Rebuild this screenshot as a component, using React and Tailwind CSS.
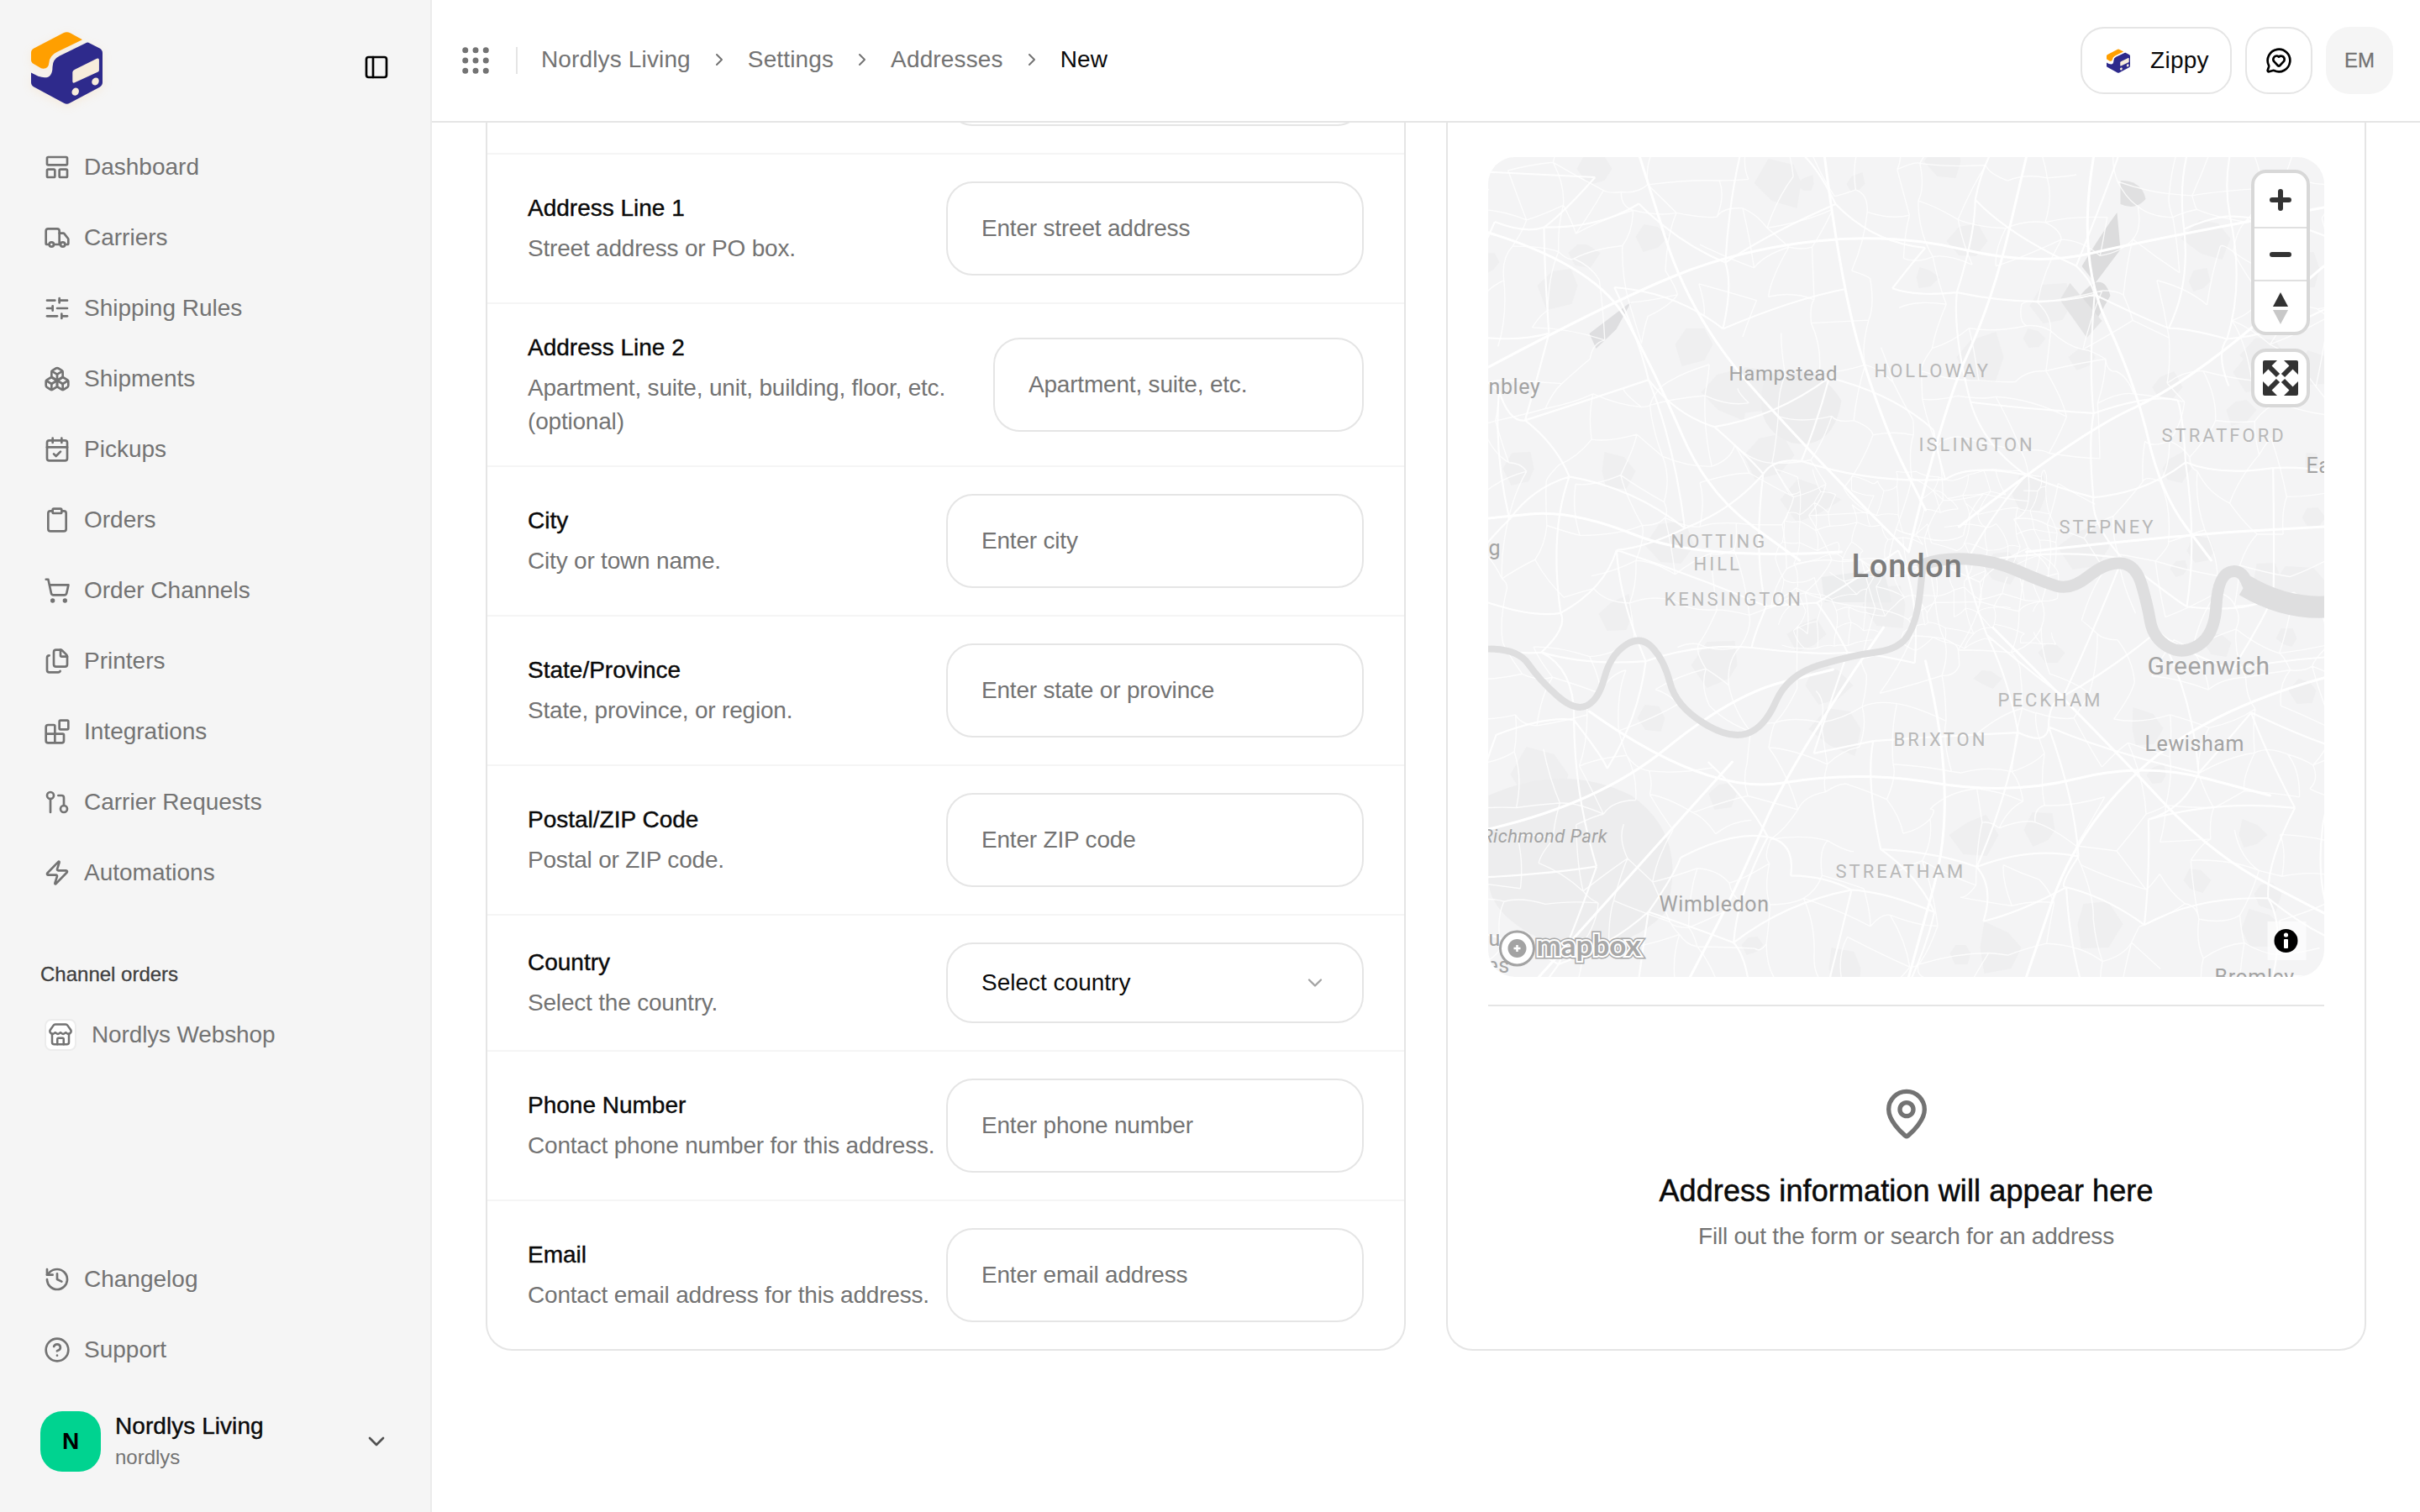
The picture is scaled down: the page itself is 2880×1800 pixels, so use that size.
import React from 'react';
import {
  LayoutPanelTop, Truck, SlidersHorizontal, Boxes, CalendarCheck, Clipboard, ShoppingCart, Files, Blocks,
  GitPullRequest, Zap, History, CircleHelp, Store, ChevronDown, ChevronRight, PanelLeft, Grip,
  MessageCircleHeart, MapPin,
} from 'lucide-react';

const navItems = [
  { label: 'Dashboard', icon: LayoutPanelTop },
  { label: 'Carriers', icon: Truck },
  { label: 'Shipping Rules', icon: SlidersHorizontal },
  { label: 'Shipments', icon: Boxes },
  { label: 'Pickups', icon: CalendarCheck },
  { label: 'Orders', icon: Clipboard },
  { label: 'Order Channels', icon: ShoppingCart },
  { label: 'Printers', icon: Files },
  { label: 'Integrations', icon: Blocks },
  { label: 'Carrier Requests', icon: GitPullRequest },
  { label: 'Automations', icon: Zap },
];

const formRows = [
  { label: 'Address Line 1', hint: 'Street address or PO box.', placeholder: 'Enter street address' },
  { label: 'Address Line 2', hint: 'Apartment, suite, unit, building, floor, etc. (optional)', placeholder: 'Apartment, suite, etc.', narrow: true },
  { label: 'City', hint: 'City or town name.', placeholder: 'Enter city' },
  { label: 'State/Province', hint: 'State, province, or region.', placeholder: 'Enter state or province' },
  { label: 'Postal/ZIP Code', hint: 'Postal or ZIP code.', placeholder: 'Enter ZIP code' },
  { label: 'Country', hint: 'Select the country.', select: 'Select country' },
  { label: 'Phone Number', hint: 'Contact phone number for this address.', placeholder: 'Enter phone number' },
  { label: 'Email', hint: 'Contact email address for this address.', placeholder: 'Enter email address', last: true },
];

const mapLabels = [
  { t: 'Hampstead', x: 286, y: 260, s: 24 },
  { t: 'nbley', x: 0, y: 275, s: 25 },
  { t: 'g', x: 0, y: 467, s: 25 },
  { t: 'Ea', x: 973, y: 369, s: 25 },
  { t: 'Greenwich', x: 784, y: 608, s: 30 },
  { t: 'Lewisham', x: 781, y: 700, s: 25 },
  { t: 'Wimbledon', x: 203, y: 891, s: 25 },
  { t: 'Bromley', x: 864, y: 978, s: 25 },
  { t: 'u', x: 0, y: 932, s: 25 },
  { t: 'es', x: -2, y: 964, s: 25 },
  { t: 'HOLLOWAY', x: 459, y: 256, s: 22, b: true },
  { t: 'ISLINGTON', x: 512, y: 344, s: 22, b: true },
  { t: 'STRATFORD', x: 801, y: 333, s: 22, b: true },
  { t: 'NOTTING', x: 217, y: 459, s: 22, b: true },
  { t: 'HILL', x: 244, y: 486, s: 22, b: true },
  { t: 'KENSINGTON', x: 209, y: 528, s: 22, b: true },
  { t: 'STEPNEY', x: 679, y: 442, s: 22, b: true },
  { t: 'PECKHAM', x: 606, y: 648, s: 22, b: true },
  { t: 'BRIXTON', x: 482, y: 695, s: 22, b: true },
  { t: 'STREATHAM', x: 413, y: 852, s: 22, b: true },
];

const thamesWest = [[-10, 586], [33, 583], [61, 623], [103, 660], [131, 646], [145, 593], [181, 569], [209, 599], [223, 653], [286, 693], [328, 680], [356, 616], [433, 593], [489, 586], [510, 552], [517, 485]];
const thamesEast = [[517, 485], [538, 477], [601, 480], [658, 505], [693, 516], [735, 482], [770, 485], [784, 532], [791, 573], [826, 593], [864, 569], [868, 499], [896, 489], [910, 526], [1004, 539]];

const majorRoads = [
  [[500, 470], [380, 350], [240, 190], [180, 0]],
  [[500, 470], [540, 300], [600, 170], [640, 0]],
  [[560, 440], [700, 330], [830, 270], [994, 130]],
  [[420, 470], [250, 480], [100, 420], [0, 430]],
  [[470, 560], [360, 720], [300, 860], [240, 976]],
  [[520, 600], [560, 760], [500, 976]],
  [[600, 560], [740, 700], [860, 830], [994, 900]],
  [[640, 470], [820, 450], [994, 440]],
  [[0, 250], [150, 170], [300, 110], [480, 90], [650, 130], [780, 100], [994, 60]],
  [[120, 660], [260, 760], [440, 730], [620, 760], [780, 720], [930, 760]],
  [[0, 90], [130, 130], [200, 260], [260, 400], [370, 480]],
  [[720, 0], [700, 120], [770, 270], [800, 400], [860, 480]],
  [[0, 800], [130, 770], [290, 640], [410, 610]],
  [[994, 620], [850, 660], [700, 800], [640, 976]],
  [[60, 976], [200, 820], [290, 720]],
  [[400, 0], [420, 160], [470, 320], [520, 420]],
];

// small seeded generator so the map comes out the same every run
const makeRandom = (seed) => {
  let value = seed;
  return () => {
    value = (value * 16807) % 2147483647;
    return (value - 1) / 2147483646;
  };
};

const smoothPath = (points) => {
  let d = `M${points[0][0]} ${points[0][1]}`;
  for (let i = 1; i < points.length - 1; i++) {
    const mx = (points[i][0] + points[i + 1][0]) / 2;
    const my = (points[i][1] + points[i + 1][1]) / 2;
    d += ` Q${points[i][0]} ${points[i][1]} ${mx} ${my}`;
  }
  const end = points[points.length - 1];
  return `${d} L${end[0]} ${end[1]}`;
};

const buildStreets = (seed, cell, x0, y0, x1, y1, keep) => {
  const random = makeRandom(seed);
  const cols = Math.ceil((x1 - x0) / cell);
  const rows = Math.ceil((y1 - y0) / cell);
  const nodes = [];
  for (let r = 0; r <= rows; r++) {
    nodes.push([]);
    for (let c = 0; c <= cols; c++) {
      nodes[r].push([x0 + c * cell + (random() - 0.5) * cell * 0.9, y0 + r * cell + (random() - 0.5) * cell * 0.9]);
    }
  }
  const curve = (a, b) => {
    const mx = (a[0] + b[0]) / 2 + (random() - 0.5) * cell * 0.4;
    const my = (a[1] + b[1]) / 2 + (random() - 0.5) * cell * 0.4;
    return `M${a[0]} ${a[1]} Q${mx} ${my} ${b[0]} ${b[1]}`;
  };
  const streets = [];
  for (let r = 0; r <= rows; r++) {
    for (let c = 0; c <= cols; c++) {
      if (c < cols && random() < keep) streets.push(curve(nodes[r][c], nodes[r][c + 1]));
      if (r < rows && random() < keep) streets.push(curve(nodes[r][c], nodes[r + 1][c]));
    }
  }
  return streets.join(' ');
};

const buildPatches = () => {
  const random = makeRandom(77);
  const patches = [];
  for (let i = 0; i < 70; i++) {
    const cx = random() * 994;
    const cy = random() * 976;
    const size = 12 + random() * 22;
    const pts = [];
    for (let k = 0; k < 6; k++) {
      const a = (k / 6) * Math.PI * 2;
      const rr = size * (0.6 + random() * 0.6);
      pts.push(`${Math.round(cx + Math.cos(a) * rr)},${Math.round(cy + Math.sin(a) * rr)}`);
    }
    patches.push(pts.join(' '));
  }
  return patches;
};

const outerStreets = buildStreets(11, 46, -20, -20, 1010, 990, 0.72);
const midStreets = buildStreets(37, 104, -20, -20, 1010, 990, 0.8);
const innerStreets = buildStreets(23, 20, 350, 380, 660, 580, 0.75);
const patches = buildPatches();

const Logo = ({ className }) => (
  <svg viewBox="115 110 250 255" className={className}>
    <path fill="#ff9f00" d="M125 170 L228 116 Q240 110 252 116 L292 138 Q295 140 290 142 L205 183 Q180 195 178 220 Q176 245 150 240 L120 222 Q115 218 115 212 L115 185 Q115 175 125 170 Z" />
    <path fill="#2e2a8c" d="M316 150 L355 170 Q365 176 365 186 L365 290 Q365 300 355 306 L250 362 Q240 368 230 362 L125 305 Q115 300 115 290 L115 255 L140 268 Q190 285 190 235 Q190 208 215 196 L305 152 Q312 148 316 150 Z" />
    <path fill="#f7ecdc" d="M268 244 L345 206 Q353 203 353 211 L353 246 Q353 251 348 253 L268 290 Q260 293 260 286 L260 254 Q260 248 268 244 Z" />
    <ellipse cx="270" cy="322" rx="12" ry="14" fill="#f7ecdc" transform="rotate(30 270 322)" />
    <ellipse cx="340" cy="286" rx="12" ry="14" fill="#f7ecdc" transform="rotate(30 340 286)" />
  </svg>
);

const NavRow = ({ label, icon: Icon }) => (
  <a className="flex h-[72px] items-center gap-4 px-4 text-[28px] leading-[40px] text-[#737373]">
    <Icon size={32} strokeWidth={2} className="shrink-0" />
    <span>{label}</span>
  </a>
);

const Sidebar = () => (
  <aside className="flex h-screen w-[514px] shrink-0 flex-col border-r-2 border-[#ebebeb] bg-[#f5f5f5]">
    <div className="flex h-[160px] shrink-0 items-center justify-between pl-[37px] pr-[48px]">
      <Logo className="h-[87px] w-[85px] drop-shadow-[0_3px_6px_rgba(255,170,60,0.12)]" />
      <PanelLeft size={32} strokeWidth={2} className="text-black" />
    </div>
    <nav className="mt-[3px] flex flex-col gap-3 px-9">
      {navItems.map((item) => (
        <NavRow key={item.label} {...item} />
      ))}
    </nav>
    <div className="mt-[69px] px-12 text-[24px] leading-[32px] text-[#404040] [-webkit-text-stroke:0.3px_#404040]">Channel orders</div>
    <div className="mt-[36px] flex items-center gap-[18px] px-[53px] text-[28px] leading-[40px] text-[#737373]">
      <span className="flex h-[38px] w-[38px] items-center justify-center rounded-lg border-2 border-[#ececec] bg-white">
        <Store size={30} strokeWidth={2} />
      </span>
      <span className="tracking-[-0.005em]">Nordlys Webshop</span>
    </div>
    <div className="mt-auto flex flex-col gap-3 px-9">
      <NavRow label="Changelog" icon={History} />
      <NavRow label="Support" icon={CircleHelp} />
    </div>
    <div className="mt-[37px] flex items-center pb-12 pl-12 pr-[48px]">
      <span className="flex h-[72px] w-[72px] items-center justify-center rounded-[26px] bg-[#00d390] text-[28px] font-semibold text-black">N</span>
      <div className="ml-[17px] flex flex-1 flex-col">
        <span className="text-[28px] leading-[36px] tracking-[0.002em] text-[#0a0a0a] [-webkit-text-stroke:0.4px_#0a0a0a]">Nordlys Living</span>
        <span className="pt-0.5 text-[24px] leading-[34px] text-[#737373]">nordlys</span>
      </div>
      <ChevronDown size={32} strokeWidth={2} className="text-[#525252]" />
    </div>
  </aside>
);

const Topbar = () => (
  <header className="flex h-[146px] shrink-0 items-center border-b-2 border-[#e5e5e5] bg-white pl-[31px] pr-8">
    <Grip size={42} strokeWidth={2} className="text-[#737373]" />
    <span className="ml-[27px] mr-[28px] h-8 w-0.5 bg-[#e5e5e5]" />
    <div className="-mt-0.5 flex items-center gap-[22px] text-[28px] leading-[40px] tracking-[0.005em] text-[#737373]">
      <span>Nordlys Living</span>
      <ChevronRight size={24} strokeWidth={2} />
      <span>Settings</span>
      <ChevronRight size={24} strokeWidth={2} />
      <span>Addresses</span>
      <ChevronRight size={24} strokeWidth={2} />
      <span className="text-[#0a0a0a]">New</span>
    </div>
    <div className="ml-auto flex items-center gap-4">
      <button className="flex h-20 w-[180px] items-center gap-[24px] rounded-[28px] border-2 border-[#e5e5e5] bg-white pl-[29px] text-[28px] tracking-[0.01em] text-[#0a0a0a]">
        <Logo className="h-[29px] w-[28px]" />
        Zippy
      </button>
      <button className="flex h-20 w-20 items-center justify-center rounded-[28px] border-2 border-[#e5e5e5] bg-white">
        <MessageCircleHeart size={32} strokeWidth={2} className="text-black" />
      </button>
      <span className="flex h-20 w-20 items-center justify-center rounded-[28px] bg-[#f5f5f5] text-[24px] text-[#737373] [-webkit-text-stroke:0.3px_#737373]">EM</span>
    </div>
  </header>
);

const FormRow = ({ label, hint, placeholder, select, narrow, last }) => (
  <div className={`flex items-center justify-between gap-2 py-8 pl-12 pr-12 ${last ? '' : 'border-b-2 border-[#f5f5f5]'}`}>
    <div className="min-w-0 flex-1">
      <div className="text-[28px] leading-[40px] text-[#0a0a0a] [-webkit-text-stroke:0.4px_#0a0a0a]">{label}</div>
      <div className="mt-2 text-[28px] leading-[40px] tracking-[-0.007em] text-[#737373]">{hint}</div>
    </div>
    {select ? (
      <button className="flex h-24 w-[497px] shrink-0 items-center justify-between rounded-[32px] border-2 border-[#e5e5e5] bg-white pl-[40px] pr-[42px] text-[28px] text-[#0a0a0a]">
        {select}
        <ChevronDown size={28} strokeWidth={2} className="text-[#a3a3a3]" />
      </button>
    ) : (
      <input
        placeholder={placeholder}
        className={`h-28 shrink-0 rounded-[32px] border-2 border-[#e5e5e5] bg-white px-[40px] text-[28px] tracking-[-0.007em] outline-none placeholder:text-[#737373] ${narrow ? 'w-[441px]' : 'w-[497px]'}`}
      />
    )}
  </div>
);

const MapCanvas = () => (
  <div className="relative h-[976px] w-full shrink-0 overflow-hidden rounded-[32px] bg-[#f4f4f5]">
    <svg viewBox="0 0 994 976" className="block h-full w-full">
      {patches.map((pts, i) => (
        <polygon key={i} points={pts} fill="#efeff0" />
      ))}
      <path fill="#ededee" d="M0 760 Q90 720 170 760 Q240 810 210 900 Q150 960 60 930 Q0 900 0 860 Z" />
      <path fill="#ededee" d="M330 260 Q390 240 420 290 Q410 350 360 340 Q310 320 330 260 Z" />
      <path fill="#ecedee" d="M396 500 L470 490 L480 530 L400 530 Z" />
      <path fill="#dedee0" d="M120 210 L170 172 L152 205 L128 228 Z" />
      <path fill="#dcdcdd" d="M706 130 Q730 90 748 66 L752 110 L722 150 Z" />
      <path fill="#dcdcdd" d="M700 170 Q730 130 740 165 L720 200 Z" />
      <path fill="#e4e4e5" d="M692 150 L730 195 L712 215 L680 170 Z" />
      <path fill="#e0e0e1" d="M752 28 Q778 28 782 50 Q770 64 752 56 Z" />
      <path d={outerStreets} fill="none" stroke="#ffffff" strokeWidth="1.4" opacity="0.8" />
      <path d={midStreets} fill="none" stroke="#ffffff" strokeWidth="2.2" opacity="0.9" />
      <path d={innerStreets} fill="none" stroke="#ffffff" strokeWidth="1.1" opacity="0.85" />
      {majorRoads.map((road, i) => (
        <path key={i} d={smoothPath(road)} fill="none" stroke="#ffffff" strokeWidth="3" strokeLinecap="round" />
      ))}
      <path d={smoothPath(thamesWest)} fill="none" stroke="#dededf" strokeWidth="8" strokeLinecap="round" />
      <path d={smoothPath(thamesEast)} fill="none" stroke="#dededf" strokeWidth="14" strokeLinecap="round" />
      <path d="M900 510 Q950 540 1004 535" fill="none" stroke="#dededf" strokeWidth="26" />
      {mapLabels.map((label) => (
        <text
          key={label.t}
          x={label.x}
          y={label.y}
          dominantBaseline="middle"
          fontFamily="Roboto, sans-serif"
          fontSize={label.s}
          letterSpacing={label.b ? 3 : 0.6}
          fill={label.b ? '#b8b8b8' : '#a3a3a3'}
        >
          {label.t}
        </text>
      ))}
      <text x="432" y="490" dominantBaseline="middle" fontFamily="Roboto, sans-serif" fontSize="38" fontWeight="500" letterSpacing="0.8" fill="#7c7c7c">London</text>
      <text x="-8" y="810" dominantBaseline="middle" fontFamily="Roboto, sans-serif" fontSize="22" fontStyle="italic" letterSpacing="0.4" fill="#a3a3a3">Richmond Park</text>
      <circle cx="34" cy="942" r="20" fill="#ffffff" stroke="#a3a3a3" strokeWidth="3" />
      <circle cx="34" cy="942" r="11" fill="#a3a3a3" />
      <path d="M30 942 h8 M34 938 v8" stroke="#ffffff" strokeWidth="2.5" />
      <text x="57" y="942" dominantBaseline="middle" fontFamily="Lato, sans-serif" fontWeight="700" fontSize="35" fill="#a8a8a8" stroke="#a8a8a8" strokeWidth="7">mapbox</text>
      <text x="57" y="942" dominantBaseline="middle" fontFamily="Lato, sans-serif" fontWeight="700" fontSize="35" fill="#a8a8a8" stroke="#ffffff" strokeWidth="4" paintOrder="stroke">mapbox</text>
      <rect x="927" y="910" width="46" height="46" fill="#ffffff" opacity="0.65" />
      <circle cx="949" cy="933" r="14" fill="#000000" />
      <circle cx="949" cy="926" r="2.6" fill="#ffffff" />
      <rect x="946.5" y="931" width="5" height="11" rx="1" fill="#ffffff" />
    </svg>
    <div className="absolute right-[17px] top-[15px] flex w-[70px] flex-col overflow-hidden rounded-[18px] border-4 border-[#d8d8d8] bg-white">
      <div className="flex h-[66px] items-center justify-center border-b-2 border-[#e0e0e0]">
        <svg viewBox="0 0 26 26" className="h-[26px] w-[26px]"><path d="M13 3v20M3 13h20" stroke="#333333" strokeWidth="6" strokeLinecap="round" /></svg>
      </div>
      <div className="flex h-[63px] items-center justify-center border-b-2 border-[#e0e0e0]">
        <svg viewBox="0 0 26 8" className="h-2 w-[26px]"><path d="M3 4h20" stroke="#333333" strokeWidth="6" strokeLinecap="round" /></svg>
      </div>
      <div className="flex h-[60px] items-center justify-center pt-1">
        <svg viewBox="0 0 18 38" className="h-[38px] w-[18px]">
          <path d="M9 0L18 17H0Z" fill="#333333" />
          <path d="M9 38L18 21H0Z" fill="#c8c8c8" />
        </svg>
      </div>
    </div>
    <div className="absolute right-[17px] top-[228px] flex h-[70px] w-[70px] items-center justify-center rounded-[18px] border-4 border-[#d8d8d8] bg-white">
      <svg viewBox="0 0 42 42" className="h-[42px] w-[42px]">
        {[0, 90, 180, 270].map((turn) => (
          <g key={turn} transform={`rotate(${turn} 21 21)`}>
            <path d="M2 0H17L0 17V2Q0 0 2 0Z" fill="#333333" />
            <path d="M6 6L18 18" stroke="#333333" strokeWidth="6" />
          </g>
        ))}
      </svg>
    </div>
  </div>
);

const App = () => (
  <div className="flex h-screen w-full overflow-hidden bg-white font-['Liberation_Sans',sans-serif]">
    <Sidebar />
    <main className="flex min-w-0 flex-1 flex-col">
      <Topbar />
      <div className="flex-1 overflow-hidden">
        <div className="-mt-[142px] grid grid-cols-2 gap-12 px-16">
          <section className="rounded-[32px] border-2 border-[#e5e5e5]">
            <div className="flex justify-end border-b-2 border-[#f5f5f5] py-8 pr-12">
              <div className="h-28 w-[497px] rounded-[32px] border-2 border-[#e5e5e5]" />
            </div>
            {formRows.map((row) => (
              <FormRow key={row.label} {...row} />
            ))}
          </section>
          <section className="flex flex-col rounded-[32px] border-2 border-[#e5e5e5] px-12 pt-[181px]">
            <MapCanvas />
            <div className="mt-[33px] h-0.5 shrink-0 bg-[#e5e5e5]" />
            <div className="flex flex-col items-center pt-[96px]">
              <MapPin size={64} strokeWidth={2} className="text-[#737373]" />
              <h3 className="mt-[36px] text-[36px] leading-[48px] tracking-[0.003em] text-[#0a0a0a] [-webkit-text-stroke:0.5px_#0a0a0a]">Address information will appear here</h3>
              <p className="mt-[10px] text-[28px] leading-[40px] tracking-[-0.008em] text-[#737373]">Fill out the form or search for an address</p>
            </div>
          </section>
        </div>
      </div>
    </main>
  </div>
);

export default App;
